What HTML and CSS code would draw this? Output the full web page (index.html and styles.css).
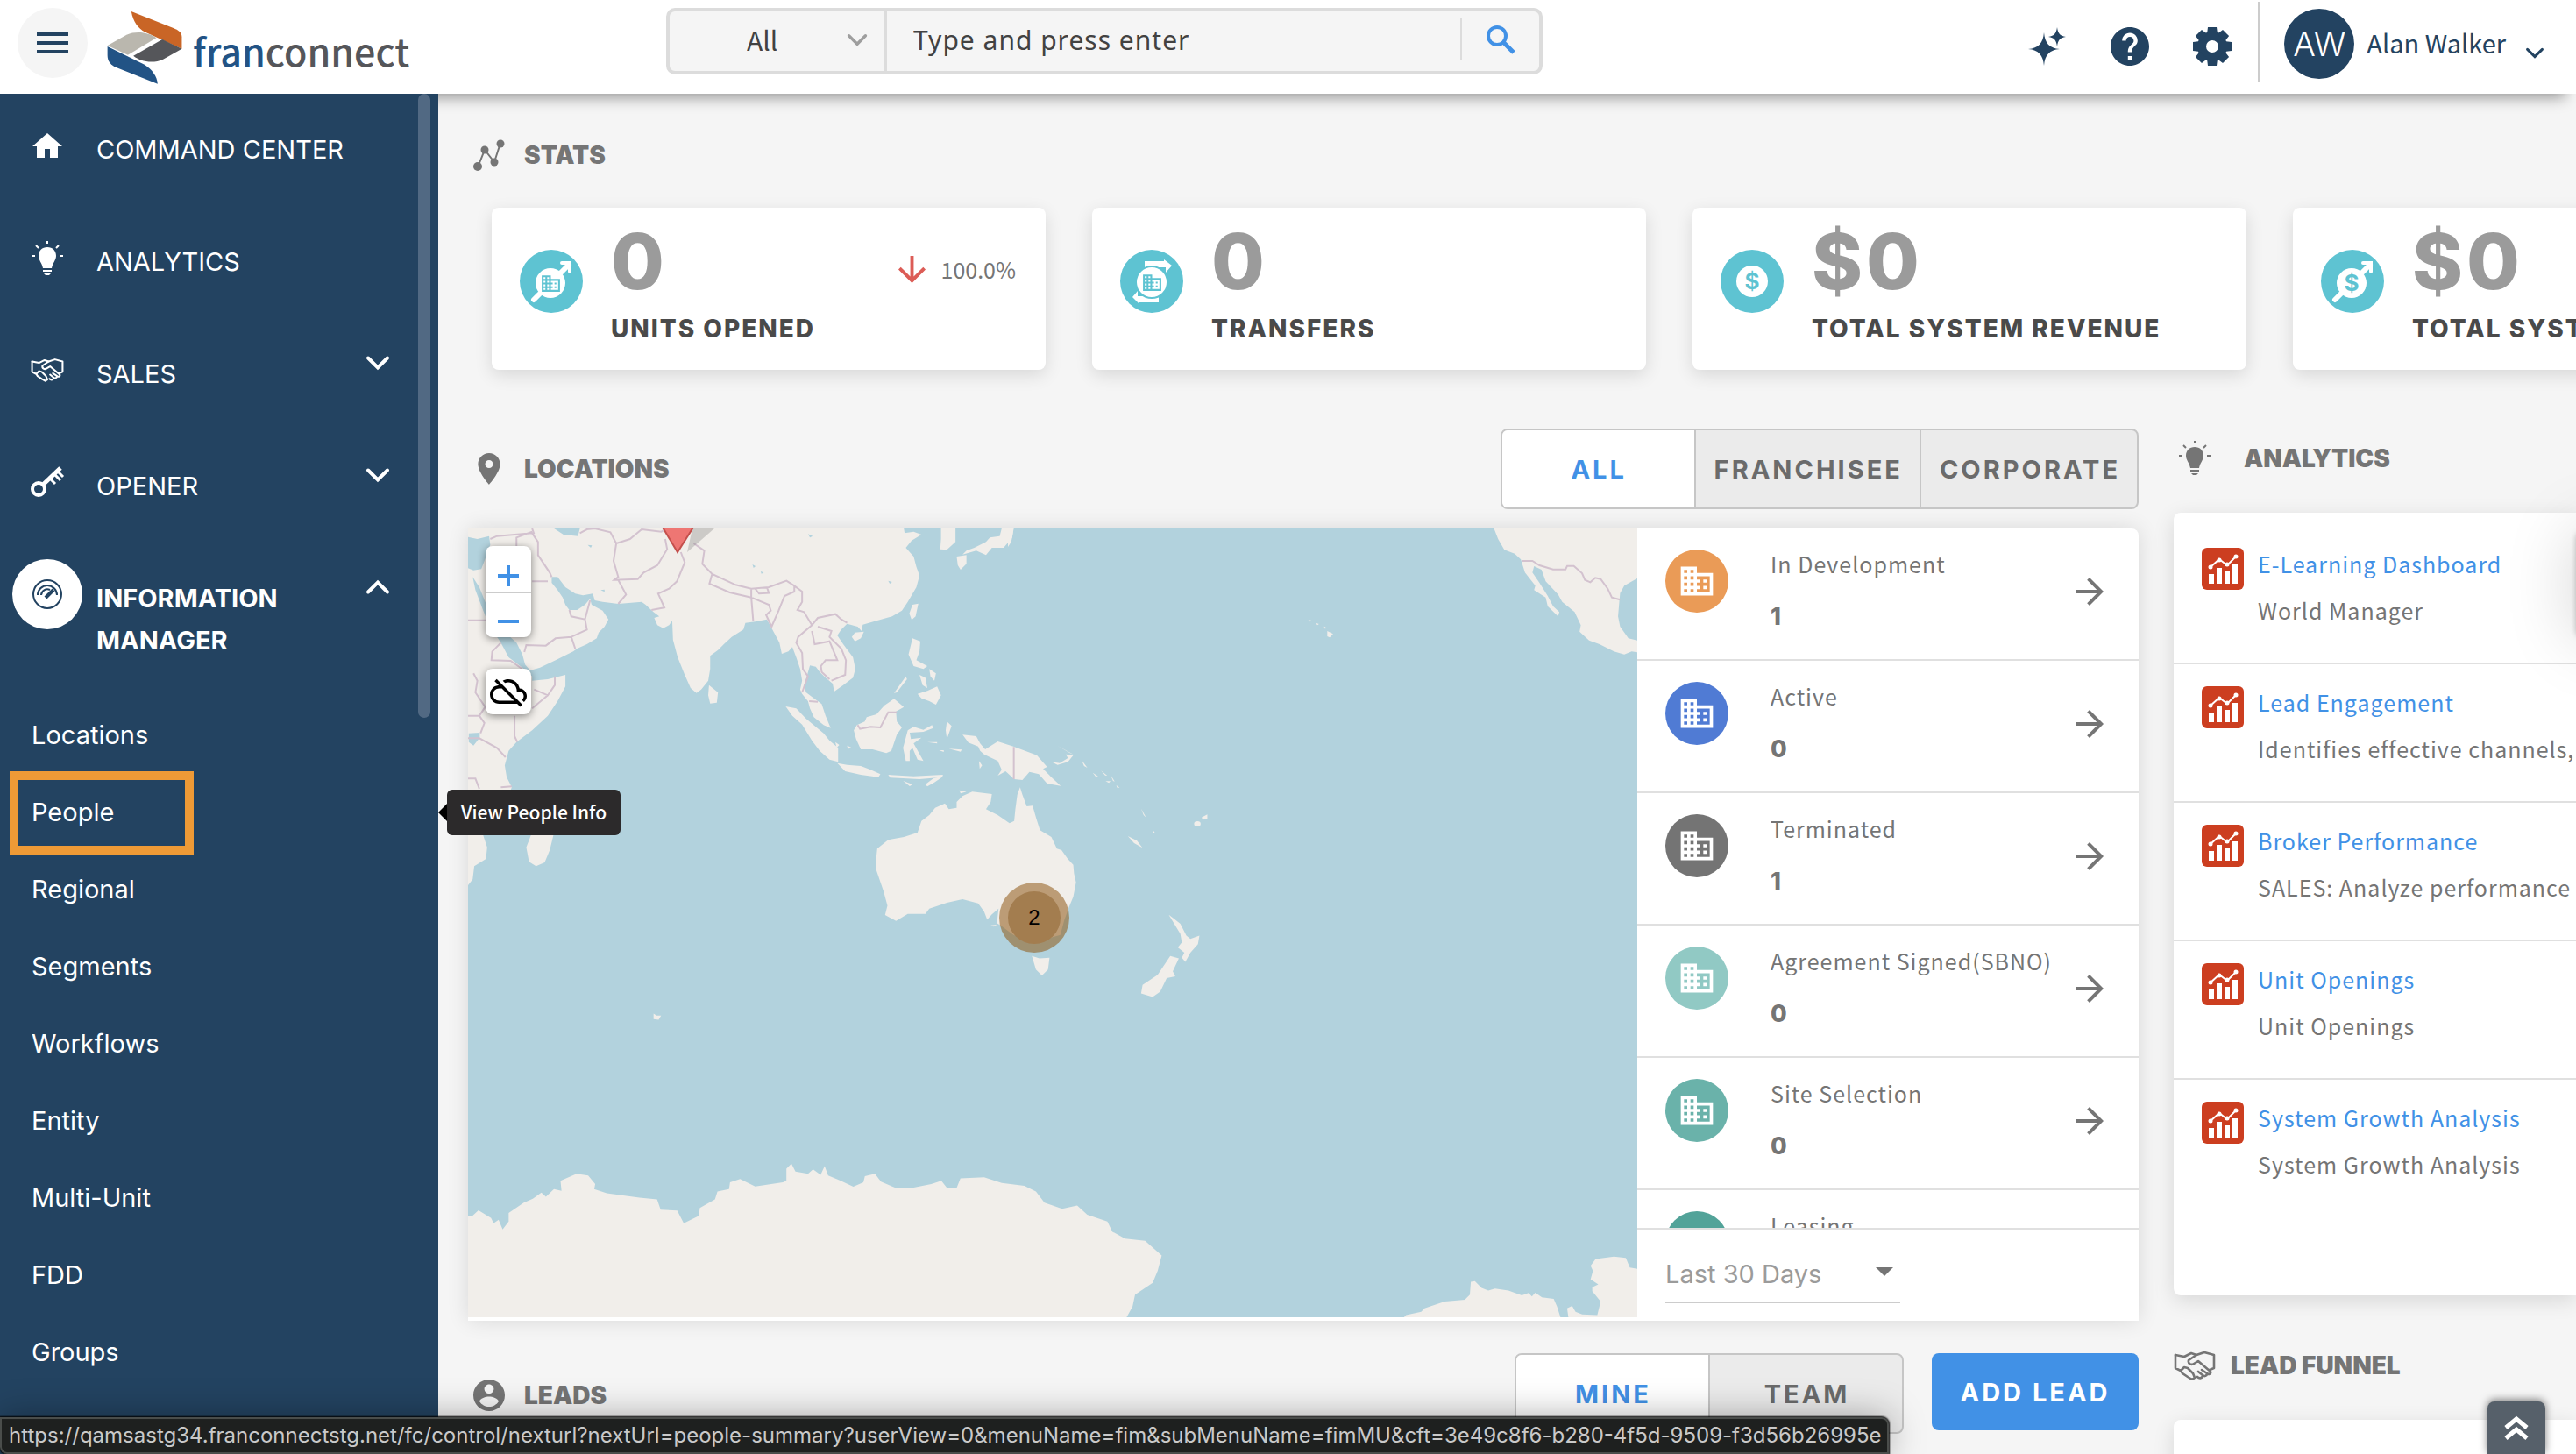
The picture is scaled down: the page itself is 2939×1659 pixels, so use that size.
FILE: index.html
```html
<!DOCTYPE html>
<html lang="en">
<head>
<meta charset="utf-8">
<title>FranConnect - Command Center</title>
<link rel="stylesheet" href="styles.css">
</head>
<body>
<svg class="sprite" aria-hidden="true">
  <symbol id="building" viewBox="0 0 24 24"><path d="M12 7V3H2v18h20V7H12zM6 19H4v-2h2v2zm0-4H4v-2h2v2zm0-4H4V9h2v2zm0-4H4V5h2v2zm4 12H8v-2h2v2zm0-4H8v-2h2v2zm0-4H8V9h2v2zm0-4H8V5h2v2zm10 12h-8v-2h2v-2h-2v-2h2v-2h-2V9h8v10zm-2-8h-2v2h2v-2zm0 4h-2v2h2v-2z"/></symbol>
  <symbol id="arrow" viewBox="4 4 16 16"><path d="M12 4l-1.41 1.41L16.17 11H4v2h12.17l-5.58 5.59L12 20l8-8z"/></symbol>
  <symbol id="chevron" viewBox="0 0 28 17"><path d="M3 3l11 11L25 3" fill="none" stroke="currentColor" stroke-width="4" stroke-linecap="round"/></symbol>
  <symbol id="bulb" viewBox="0 0 36 40"><path d="M18 7c6 0 10 4 10 10 0 5-4 8-5 14H13c-1-6-5-9-5-14C8 11 12 7 18 7zM13 33h10v2H13zM14 37h8l-2 2h-4z"/><path d="M18 0v3M5 5l3 3M31 5l-3 3M0 17h4M32 17h4" stroke="currentColor" stroke-width="2"/></symbol>
  <symbol id="handshake" viewBox="0 0 48 34"><g fill="none" stroke="currentColor" stroke-width="2.6" stroke-linejoin="round" stroke-linecap="round"><path d="M2 5l10 2 8-4 6 2 9-3 11 3v15l-5 2"/><path d="M2 5v15l6 3M26 5l-9 6c-1 4 3 6 6 4l5-3 14 12c1 2-2 4-4 2l-6-4M38 26c0 3-3 4-5 2l-5-4M33 29c-1 3-4 3-6 1M8 23l4-4 4 1 3 3 3 3 2 5-3 2-5-3-6-4z"/></g></symbol>
  <symbol id="chart" viewBox="0 0 48 48"><rect width="48" height="48" rx="6" fill="#cc3e20"/><path fill="#fff" d="M8 30h6v11H8zM17 23h6v18h-6zM26 27h6v14h-6zM35 19h6v22h-6z"/><path d="M10 22l10-9 9 7 10-10" fill="none" stroke="#fff" stroke-width="2"/><g fill="#fff"><circle cx="10" cy="22" r="2.5"/><circle cx="20" cy="14" r="2.5"/><circle cx="29" cy="19" r="2.5"/><circle cx="39" cy="10" r="2.5"/></g></symbol>
</svg>
<div class="app">
  <header class="topbar">
    <div class="brand">
      <button class="burger" aria-label="Menu"><span></span><span></span><span></span></button>
      <a class="logo" href="#">
        <svg width="88" height="84" viewBox="121 14 88 84"><g transform="scale(.4847 .3333)"><path fill="#c96526" d="M309 42C314 80 326 100 340 112L428 170V130C428 114 420 106 408 99Z"/><path fill="#bab7ae" d="M253 159L298 122C322 108 350 114 368 133L301 191Z"/><path fill="#55565a" d="M382 138L428 170L384 206C360 222 330 214 314 194Z"/><path fill="#225385" d="M253 162L340 224C358 240 370 265 371 290L275 235C260 226 253 212 253 192Z"/></g></svg>
        <span class="wordmark"><b>fran</b>connect</span>
      </a>
    </div>
    <form class="search">
      <div class="scope"><select aria-label="Search scope"><option>All</option></select><svg width="24" height="15"><use href="#chevron"/></svg></div>
      <input type="text" aria-label="Search" placeholder="Type and press enter">
      <button type="button" aria-label="Search"><svg width="34" height="34" viewBox="0 0 34 34" fill="none" stroke="currentColor"><circle cx="13" cy="13" r="10" stroke-width="4"/><path d="M20 20l12 12" stroke-width="5"/></svg></button>
    </form>
    <div class="tools">
      <button aria-label="Assistant"><svg width="44" height="44" viewBox="0 0 44 44"><path d="M18 6c1 12 6 18 18 19-12 1-17 7-18 19-1-12-6-18-18-19 12-1 17-7 18-19zM33 0c1 7 3 10 10 11-7 1-9 4-10 11-1-7-3-10-10-11 7-1 9-4 10-11z"/></svg></button>
      <button aria-label="Help"><svg width="44" height="44" viewBox="2 2 20 20"><path d="M12 2C6.48 2 2 6.48 2 12s4.48 10 10 10 10-4.48 10-10S17.52 2 12 2zm1 17h-2v-2h2v2zm2.07-7.75l-.9.92C13.45 12.9 13 13.5 13 15h-2v-.5c0-1.1.45-2.1 1.17-2.83l1.24-1.26c.37-.36.59-.86.59-1.41 0-1.1-.9-2-2-2s-2 .9-2 2H8c0-2.21 1.79-4 4-4s4 1.79 4 4c0 .88-.36 1.68-.93 2.25z"/></svg></button>
      <button aria-label="Settings"><svg width="44" height="44" viewBox="-22 -22 44 44"><circle r="12" fill="none" stroke="currentColor" stroke-width="10"/><g id="teeth"><path d="M-5 -22H5L6 -14H-6ZM-5 22H5L6 14H-6ZM-22 -5V5L-14 6V-6ZM22 -5V5L14 6V-6Z"/></g><use href="#teeth" transform="rotate(45)"/></svg></button>
    </div>
    <button class="user"><span class="avatar">AW</span><span class="name">Alan Walker</span><svg width="22" height="13"><use href="#chevron"/></svg></button>
  </header>
  <div class="body">
    <nav class="sidebar">
      <a class="item" href="#"><span class="ico"><svg width="34" height="28" viewBox="0 0 34 28"><path d="M17 0L34 15H29V28H20V18H14V28H5V15H0Z"/></svg></span><span class="label">COMMAND CENTER</span></a>
      <a class="item" href="#"><span class="ico"><svg width="36" height="40"><use href="#bulb"/></svg></span><span class="label">ANALYTICS</span></a>
      <a class="item" href="#"><span class="ico"><svg width="38" height="28"><use href="#handshake"/></svg></span><span class="label">SALES</span><svg class="chev" width="28" height="22"><use href="#chevron"/></svg></a>
      <a class="item" href="#"><span class="ico"><svg width="38" height="36" viewBox="0 0 38 36" fill="none" stroke="currentColor"><circle cx="9" cy="26" r="7" stroke-width="4"/><path d="M14 21L34 2" stroke-width="5"/><path d="M27 9l7 7M22 14l6 6M31 6l6 6" stroke-width="3"/></svg></span><span class="label">OPENER</span><svg class="chev" width="28" height="22"><use href="#chevron"/></svg></a>
      <a class="item current" href="#"><span class="ico"><svg width="36" height="36" viewBox="0 0 36 36" fill="none" stroke="currentColor" stroke-width="2"><circle cx="18" cy="18" r="16"/><path d="M7 19a11 11 0 0 1 22 0M11 19a7 7 0 0 1 10-6"/><path d="M16 22l9-9" stroke-width="4"/></svg></span><span class="label">INFORMATION MANAGER</span><svg class="chev up" width="28" height="22"><use href="#chevron"/></svg></a>
      <ul class="submenu">
        <li><a href="#">Locations</a></li>
        <li class="picked"><a href="#">People</a><span class="tooltip" role="tooltip">View People Info</span></li>
        <li><a href="#">Regional</a></li>
        <li><a href="#">Segments</a></li>
        <li><a href="#">Workflows</a></li>
        <li><a href="#">Entity</a></li>
        <li><a href="#">Multi-Unit</a></li>
        <li><a href="#">FDD</a></li>
        <li><a href="#">Groups</a></li>
      </ul>
      <span class="scrollbar"></span>
    </nav>
    <main class="main">
      <section class="stats">
        <h2 class="heading"><svg width="36" height="40" viewBox="0 0 36 40"><path d="M5 34L13 14L24 28L31 6" fill="none" stroke="currentColor" stroke-width="2"/><circle cx="5" cy="33" r="5"/><circle cx="13" cy="14" r="4.500"/><circle cx="24" cy="28" r="4.500"/><circle cx="31" cy="7" r="4.500"/></svg>STATS</h2>
        <div class="cards">
          <article class="card">
            <svg class="badge" viewBox="0 0 72 72"><g stroke="#fff" stroke-linecap="round" fill="none"><path d="M16 57l10-10M45 28l11-11" stroke-width="6"/><path d="M48 15h9v10" stroke-width="4"/></g><circle cx="35" cy="38" r="17" fill="#fff"/><use href="#building" x="23" y="26" width="25" height="25" fill="#5ec3d2"/></svg>
            <div class="figure"><strong>0</strong><span>UNITS OPENED</span></div>
            <div class="trend"><svg width="31" height="31"><use href="#arrow"/></svg>100.0%</div>
          </article>
          <article class="card">
            <svg class="badge" viewBox="0 0 72 72"><path fill="#fff" d="M28 13H50V11L59 18L52 26V20H28ZM44 60H22V62L14 54L20 47V53H44Z"/><circle cx="36" cy="37" r="18" fill="#fff" stroke="#5ec3d2" stroke-width="2"/><use href="#building" x="24" y="25" width="25" height="25" fill="#5ec3d2"/></svg>
            <div class="figure"><strong>0</strong><span>TRANSFERS</span></div>
          </article>
          <article class="card">
            <svg class="badge" viewBox="0 0 72 72"><circle cx="36" cy="36" r="18" fill="#fff"/><text x="36" y="45" class="dollar">$</text></svg>
            <div class="figure"><strong>$0</strong><span>TOTAL SYSTEM REVENUE</span></div>
          </article>
          <article class="card">
            <svg class="badge" viewBox="0 0 72 72"><g stroke="#fff" stroke-linecap="round" fill="none"><path d="M16 57l10-10M45 28l11-11" stroke-width="6"/><path d="M48 15h9v10" stroke-width="4"/></g><circle cx="35" cy="38" r="17" fill="#fff"/><text x="35" y="47" class="dollar">$</text></svg>
            <div class="figure"><strong>$0</strong><span>TOTAL SYSTEM REVENUE</span></div>
          </article>
        </div>
      </section>
      <div class="columns">
        <div class="left">
          <div class="bar">
            <h2 class="heading"><svg width="36" height="36" viewBox="2 2 20 20"><path d="M12 2C8.130 2 5 5.130 5 9c0 5.250 7 13 7 13s7-7.750 7-13c0-3.870-3.130-7-7-7zm0 9.500c-1.380 0-2.500-1.120-2.500-2.500s1.120-2.500 2.500-2.500 2.500 1.120 2.500 2.500-1.120 2.500-2.500 2.500z"/></svg>LOCATIONS</h2>
            <div class="toggle"><button class="on">ALL</button><button>FRANCHISEE</button><button>CORPORATE</button></div>
          </div>
          <section class="panel">
            <div class="map">
              <svg class="world" viewBox="534 603 1334 900" preserveAspectRatio="xMinYMin slice">
                <g class="land" transform="translate(500 590) scale(.4464 .33333)">
                  <path d="M76 39H1190L1192 55 1215 50 1235 60 1210 80 1195 105 1215 135 1222 170 1230 200 1222 240 1200 290 1185 320 1160 340 1120 355 1085 368 1082 390 1072 375 1045 365 1030 385 1020 405 1035 435 1060 480 1066 520 1060 550 1035 575 1012 597 1008 570 990 550 975 530 965 512 950 508 942 545 935 575 940 600 960 620 980 640 990 680 1003 722 985 712 960 685 950 655 945 630 930 605 925 590 930 560 925 520 915 480 905 445 895 460 878 468 872 430 860 400 850 375 840 350 810 358 785 362 780 385 750 410 730 435 715 455 695 475 695 520 690 560 672 590 660 602 645 585 630 540 612 480 600 420 598 355 590 370 575 380 560 370 552 345 565 340 550 325 530 300 520 290 460 297 420 290 400 285 395 262 370 268 350 262 325 240 305 205 290 205 290 225 305 250 318 275 325 300 335 318 355 318 375 300 388 280 392 300 420 320 435 350 425 375 410 395 405 415 380 435 355 450 345 460 300 490 260 515 235 525 222 505 215 470 200 430 175 400 150 360 120 290 105 240 88 205 95 250 115 320 130 370 160 430 180 480 215 515 240 545 240 560 280 555 325 540 325 580 305 630 280 680 240 730 200 770 180 800 170 850 175 890 188 925 170 980 130 1040 115 1090 125 1130 122 1170 92 1195 88 1240 76 1260Z"/>
                  <path d="M225 1130L238 1085H295L285 1140 272 1182 250 1195 232 1180ZM692 575L715 600 712 635 695 638 690 610ZM1065 395L1088 392 1080 415 1065 425 1057 410ZM1212 300L1227 296 1220 340 1210 352 1204 330ZM1285 39H1322V85L1300 112 1283 110 1285 75ZM1325 135L1350 130V160L1335 180 1328 165ZM1350 115L1370 105 1400 85 1410 70 1435 65 1440 39H1470L1467 70 1445 105 1415 105 1400 130 1375 115 1340 128Z"/>
                  <path d="M888 648L915 655 940 690 985 740 1000 765 1022 790 1022 838 1000 830 975 800 955 765 930 710 905 680ZM1020 842L1045 848 1080 852 1105 865 1130 880 1125 890 1080 882 1040 870ZM1150 882L1215 887 1290 882 1288 890 1230 897 1155 892ZM1245 915L1265 895 1290 888 1268 908 1250 922ZM1188 903L1212 915 1205 921ZM1070 712L1090 700 1095 685 1120 675 1140 645 1165 622 1190 650 1170 665 1172 700 1185 720 1172 745 1158 800 1145 808 1110 795 1080 795 1068 760 1062 730ZM1200 730L1215 718 1240 728 1262 712 1265 722 1240 735 1205 738 1208 760 1235 755 1215 775 1240 835 1225 830 1212 790 1205 800 1205 835 1195 835 1188 790Z"/>
                  <path d="M1212 415L1232 425 1230 460 1222 490 1250 510 1240 520 1215 510 1202 470ZM1225 605L1250 595 1275 580 1285 610 1272 642 1255 630 1235 620ZM1255 520L1272 535 1268 560 1258 545ZM1230 540L1245 550 1250 585 1238 575ZM1165 602L1195 545 1198 555 1172 600ZM1300 700L1312 715 1300 760 1297 730ZM1305 793L1338 796 1335 803ZM1250 770H1275V775ZM1280 798H1292V804ZM1382 835L1390 850 1384 862ZM1015 770L1025 780 1018 790ZM1045 782L1055 788 1047 794Z"/>
                  <path d="M1340 745L1375 750 1385 775 1398 795 1430 768 1470 785 1530 815 1556 855 1546 862 1567 890 1591 920 1556 912 1535 880 1511 872 1493 900 1472 897 1450 870 1430 885 1440 865 1430 835 1395 812 1385 800 1380 785 1355 772Z"/>
                  <path d="M1122 1135L1150 1105 1190 1095 1225 1080 1235 1040 1255 1020 1270 995 1295 980 1305 1000 1325 995V975L1340 955 1365 940 1415 948 1412 975 1400 1000 1430 1020 1460 1048 1472 1040 1475 1000 1480 950 1487 925 1493 950 1504 990 1519 988 1528 1030 1538 1072 1567 1095 1581 1135 1593 1140 1609 1170 1623 1190 1625 1220 1630 1250 1623 1300 1612 1335 1600 1380 1590 1430 1550 1445 1500 1445 1470 1430 1440 1400 1428 1390 1432 1340 1415 1360 1403 1378 1395 1350 1380 1322 1340 1308 1300 1320 1255 1340 1245 1358 1200 1358 1170 1382 1142 1362 1148 1330 1138 1280 1120 1210V1160ZM1332 935L1350 940 1335 946ZM1412 1397L1428 1395 1420 1402Z"/>
                </g>
                <g class="water" transform="translate(500 590) scale(.4464 .33333)">
                  <path d="M76 68L100 75 130 65 133 95 118 150 110 178 90 182 76 175ZM296 39H362L357 65 320 60ZM78 740L106 738V755L90 782 78 770ZM415 250L425 248 425 256ZM382 95L393 97 390 105ZM945 58L957 65 950 70ZM803 162L811 168 806 174ZM824 186L832 190 826 194ZM1150 218L1160 222 1154 228Z"/>
                </g>
                <g class="border" transform="translate(500 590) scale(.4464 .33333)">
                  <path d="M133 75L150 65 240 55 255 85 255 130 285 190 290 205M240 39L245 58M200 100V70L240 50M240 220H280M362 55L380 42 400 39 440 52 455 90 490 75 520 42 570 50 585 39M455 90L448 150 460 205 450 215 510 212 525 190 560 165 585 110 580 75M460 215L480 265 460 297M620 120L630 155 610 220 590 245 562 262 578 310 545 318M653 90L680 115 675 160 700 195 760 232 800 245 845 240 890 218 910 235 930 255V290L918 318 935 325 955 370 920 410 915 430 930 465 932 520 945 545 930 600M700 195L693 228 745 258 800 275 845 300 850 320 838 335 852 375 870 320 885 270 910 255V235M800 245V275L805 355M810 245L820 262 845 260 840 240M955 370L970 345 1015 332 1030 350 1045 362M970 375L1005 390 1000 410 1030 450 1042 490 1040 540 1005 560M955 390L962 435 1000 425 1020 490H990L978 510 980 530 1000 555M948 630L970 632M1072 712L1078 725 1105 718 1130 720 1150 668 1172 668M1471 787V897M335 318L340 340 375 350 388 285M375 350L380 385 340 410 350 450M340 410L300 415 275 440 225 438 220 462M76 353H122M160 430L138 460 136 490 185 492 215 520M90 535L100 560 95 600 120 650 105 680H76M298 545V575L280 610 245 590M280 610L240 655M195 680V750L202 770M76 757H105L150 790 172 822M76 895H95L105 930M160 925L188 922M105 680L118 705 108 740"/>
                </g>
                <g class="land" transform="translate(1150 590) scale(.4719 .33333)">
                  <path d="M0 39H14L8 85 0 102ZM1175 39L1185 75 1200 112 1225 125 1240 145 1250 190 1275 235 1272 250 1300 275 1305 305 1330 340 1333 325 1318 305 1305 270 1285 225 1268 190 1272 168 1290 180 1300 220 1330 265 1340 290 1370 325 1385 370 1382 392 1405 422 1430 435 1465 460 1490 470 1508 460 1530 465V425L1500 415 1480 375 1475 340 1478 290 1480 260 1490 235 1521 210H1530V39Z"/>
                  <path d="M105 838L125 842 145 825 140 812 158 815 145 838 120 848ZM178 832L192 858 184 852ZM205 875L218 887 212 888ZM225 868L240 885 235 884ZM236 904L248 904 244 910ZM248 882L258 905 254 903ZM262 918L270 926 264 926ZM322 998L334 1028 328 1020ZM290 1092L312 1108 325 1132 305 1116ZM468 1028L482 1018V1032L472 1036ZM726 352L733 353 730 358ZM744 362L752 366 748 370ZM764 374L772 380 766 382ZM772 390L786 400 778 412 772 408ZM350 1070L355 1080 351 1084ZM120 783L158 812 150 808Z"/>
                  <ellipse cx="458" cy="1050" rx="8" ry="9"/>
                </g>
                <g class="border" transform="translate(1150 590) scale(.4719 .33333)">
                  <path d="M1243 150H1268L1285 165 1318 179H1348L1352 167H1368L1388 192 1395 215 1408 223 1420 208 1433 212 1450 245 1460 275 1480 283"/>
                </g>
                <g class="land" transform="translate(500 1050) scale(.574 .3884)">
                  <path d="M1180 105L1195 112 1215 110 1212 145 1200 162 1188 145ZM1452 -16L1463 -4 1475 10 1487 45 1495 55 1513 45 1510 70 1495 95 1485 122 1478 110 1483 95 1470 80 1478 65 1475 40ZM1455 105L1472 112 1460 150 1465 165 1448 170 1435 210 1420 225 1397 215 1400 190 1430 160ZM428 274L434 280 443 280 438 292 428 290Z"/>
                  <path d="M50 872L68 868 80 852 105 875 110 890 120 880 128 908 140 885V860L170 830 188 818 205 800 214 812 230 790 245 795 243 765 275 745 298 750 312 775 310 790 335 802 400 815 435 820 442 850 475 853 488 890 518 868 520 845 550 820 555 797 578 790 580 770 600 760 630 782 685 770 692 765V730L702 715 710 738 735 745 745 732 760 748 768 722 775 750 800 765 825 783 845 770 848 752 868 745 880 768 912 788 945 785 980 775 1000 765 1012 788H1030L1038 758 1085 755 1120 772 1165 780 1188 797 1205 830 1240 848 1270 838 1290 865 1330 885 1340 915 1365 935 1405 942 1438 985 1430 1030 1420 1065 1385 1100 1380 1135 1365 1175H50Z"/>
                </g>
                <g class="land" transform="translate(1300 1050) scale(.3827 .3884)">
                  <path d="M780 1175L795 1160 840 1150 850 1140 910 1120 970 1115 985 1100 988 1062 1000 1060 1020 1080 1040 1088 1060 1082 1100 1088 1140 1102 1160 1095 1170 1105 1180 1094 1200 1108 1235 1112 1245 1135 1258 1175ZM1280 1175L1275 1140 1290 1133 1300 1150 1320 1158 1365 1160 1375 1120 1350 1090V1078L1368 1070 1345 1055 1352 1030 1345 1015 1360 995 1415 988 1450 992 1462 1020 1484 1024H1500V1175Z"/>
                </g>
                <path d="M790 603H815L784 630Z" fill="#777" opacity=".3"/>
                <path d="M755 600H792L773 630Z" fill="#ee7673" stroke="#c4504d" stroke-width="2"/>
              </svg>
              <div class="zoom"><button aria-label="Zoom in"><svg width="26" height="26" viewBox="0 0 26 26"><path d="M11 1h4v10h10v4H15v10h-4V15H1v-4h10z"/></svg></button><button aria-label="Zoom out"><svg width="26" height="26" viewBox="0 0 26 26"><path d="M1 11h24v4H1z"/></svg></button></div>
              <button class="weather" aria-label="Clouds off"><svg width="42" height="42" viewBox="0 0 24 24"><path d="M24 15c0-2.640-2.050-4.780-4.650-4.960C18.670 6.590 15.640 4 12 4c-1.330 0-2.570.36-3.650.97l1.490 1.490C10.510 6.170 11.230 6 12 6c3.040 0 5.500 2.460 5.500 5.500v.5H19c1.660 0 3 1.340 3 3 0 .99-.48 1.850-1.210 2.400l1.410 1.410c1.090-.92 1.800-2.270 1.800-3.810zM4.410 3.860L3 5.270l2.770 2.770h-.42C2.340 8.360 0 10.910 0 14c0 3.310 2.690 6 6 6h11.730l2 2 1.410-1.410L4.410 3.860zM6 18c-2.210 0-4-1.790-4-4s1.790-4 4-4h1.730l8 8H6z"/></svg></button>
              <button class="cluster"><span>2</span></button>
            </div>
            <div class="status">
              <ul class="statuses">
                <li><i class="dot orange"><svg width="44" height="44"><use href="#building"/></svg></i><div><span>In Development</span><b>1</b></div><a href="#" aria-label="Open In Development"><svg width="32" height="32"><use href="#arrow"/></svg></a></li>
                <li><i class="dot blue"><svg width="44" height="44"><use href="#building"/></svg></i><div><span>Active</span><b>0</b></div><a href="#" aria-label="Open Active"><svg width="32" height="32"><use href="#arrow"/></svg></a></li>
                <li><i class="dot gray"><svg width="44" height="44"><use href="#building"/></svg></i><div><span>Terminated</span><b>1</b></div><a href="#" aria-label="Open Terminated"><svg width="32" height="32"><use href="#arrow"/></svg></a></li>
                <li><i class="dot mint"><svg width="44" height="44"><use href="#building"/></svg></i><div><span>Agreement Signed(SBNO)</span><b>0</b></div><a href="#" aria-label="Open Agreement Signed"><svg width="32" height="32"><use href="#arrow"/></svg></a></li>
                <li><i class="dot teal"><svg width="44" height="44"><use href="#building"/></svg></i><div><span>Site Selection</span><b>0</b></div><a href="#" aria-label="Open Site Selection"><svg width="32" height="32"><use href="#arrow"/></svg></a></li>
                <li><i class="dot green"><svg width="44" height="44"><use href="#building"/></svg></i><div><span>Leasing</span></div></li>
              </ul>
              <div class="period"><div class="picker"><select aria-label="Period"><option>Last 30 Days</option></select><svg width="20" height="10" viewBox="0 0 20 10"><path d="M0 0H20L10 10Z"/></svg></div></div>
            </div>
          </section>
          <div class="bar leads">
            <h2 class="heading"><svg width="36" height="36" viewBox="2 2 20 20"><path d="M12 2C6.480 2 2 6.480 2 12s4.480 10 10 10 10-4.480 10-10S17.520 2 12 2zm0 3c1.660 0 3 1.340 3 3s-1.340 3-3 3-3-1.340-3-3 1.340-3 3-3zm0 14.200c-2.500 0-4.710-1.280-6-3.220.03-1.990 4-3.080 6-3.080 1.990 0 5.970 1.090 6 3.080-1.290 1.940-3.500 3.220-6 3.220z"/></svg>LEADS</h2>
            <div class="toggle"><button class="on">MINE</button><button class="even">TEAM</button></div>
            <button class="primary">ADD LEAD</button>
          </div>
        </div>
        <aside class="right">
          <h2 class="heading analytics"><svg width="36" height="40"><use href="#bulb"/></svg>ANALYTICS</h2>
          <ul class="reports">
            <li><svg width="48" height="48"><use href="#chart"/></svg><div><a href="#">E-Learning Dashboard</a><p>World Manager</p></div></li>
            <li><svg width="48" height="48"><use href="#chart"/></svg><div><a href="#">Lead Engagement</a><p>Identifies effective channels,</p></div></li>
            <li><svg width="48" height="48"><use href="#chart"/></svg><div><a href="#">Broker Performance</a><p>SALES: Analyze performance</p></div></li>
            <li><svg width="48" height="48"><use href="#chart"/></svg><div><a href="#">Unit Openings</a><p>Unit Openings</p></div></li>
            <li><svg width="48" height="48"><use href="#chart"/></svg><div><a href="#">System Growth Analysis</a><p>System Growth Analysis</p></div></li>
          </ul>
          <h2 class="heading funnel"><svg width="48" height="34"><use href="#handshake"/></svg>LEAD FUNNEL</h2>
          <div class="funnel-card"></div>
        </aside>
      </div>
      <span class="drawer"></span>
    </main>
  </div>
  <button class="to-top" aria-label="Back to top"><svg width="28" height="28" viewBox="0 0 28 28" fill="none" stroke="#fff" stroke-width="5"><path d="M2 14L14 4L26 14M2 26L14 16L26 26"/></svg></button>
  <div class="link-preview">https://qamsastg34.franconnectstg.net/fc/control/nexturl?nextUrl=people-summary?userView=0&amp;menuName=fim&amp;subMenuName=fimMU&amp;cft=3e49c8f6-b280-4f5d-9509-f3d56b26995e</div>
</div>
</body>
</html>
```
FILE: styles.css
```css
:root {
  --navy: #234361;
  --blue: #4191e6;
  --gray: #757575;
  --line: #e0e0e0;
  --display: Inter, "Open Sans", sans-serif;
  --text: "Noto Sans CJK SC", "Noto Sans", sans-serif;
}

* { box-sizing: border-box; }
body { margin: 0; font-family: var(--display); font-size: 28px; color: var(--gray); background: #f5f5f5; }
button, input, select { margin: 0; padding: 0; border: 0; background: none; font: inherit; color: inherit; }
select { appearance: none; }
a { color: inherit; text-decoration: none; }
ul { list-style: none; margin: 0; padding: 0; }
h2, p { margin: 0; }
svg { display: block; flex: none; overflow: visible; }
svg:not([fill]) { fill: currentColor; }
.sprite { position: absolute; width: 0; height: 0; }

.app { position: relative; display: flex; flex-direction: column; height: 100vh; overflow: hidden; }

/* Top bar */
.topbar { position: relative; z-index: 2; flex: none; display: grid; grid-template-columns: 760px minmax(0, 1000px) 1fr auto; height: 107px; background: #fff; color: var(--navy); box-shadow: -12px 4px 16px rgba(0, 0, 0, .4); }
.brand { display: flex; padding: 9px 20px; gap: 21px; }
.burger { display: flex; flex-direction: column; justify-content: center; gap: 6px; width: 80px; height: 80px; padding: 0 22px; border-radius: 50%; background: #f5f5f5; }
.burger span { height: 4px; background: var(--navy); }
.logo { display: flex; gap: 11px; height: 90px; padding-top: 4px; }
.wordmark { padding-top: 12px; font: 500 43px/64px var(--text); color: #55565a; }
.wordmark b { font-weight: 500; color: #225385; }
.search { display: flex; height: 76px; margin-top: 9px; border: 4px solid #dcdcdc; border-radius: 10px; background: #f5f5f5; color: #424242; }
.scope { display: flex; align-items: center; width: 248px; padding-right: 18px; border-right: 4px solid #dcdcdc; color: #9e9e9e; }
.scope select { flex: 1; height: 60px; padding: 0 0 4px 88px; font: 30px/56px var(--text); color: #424242; }
.scope svg { margin-bottom: 4px; }
.search input { flex: 1; padding: 0 0 2px 30px; font: 30px/60px "Noto Sans", sans-serif; letter-spacing: 1px; }
.search input::placeholder { color: #424242; opacity: 1; }
.search > button { display: grid; place-items: center; width: 90px; height: 48px; margin-top: 8px; border-left: 2px solid #dcdcdc; color: var(--blue); }
.tools { display: flex; justify-content: flex-end; align-items: center; gap: 50px; padding: 0 30px 2px 0; }
.user { display: flex; align-items: center; gap: 14px; height: 92px; margin: 2px 36px 0 0; padding: 4px 0 0 28px; border-left: 2px solid #ccc; font: 29px/40px var(--text); }
.name { padding-bottom: 4px; }
.user svg { margin: 20px 0 0 8px; }
.avatar { display: grid; place-items: center; width: 80px; height: 80px; border-radius: 50%; background: var(--navy); color: #fff; font: 300 38px/80px var(--display); }

/* Sidebar */
.body { flex: 1; display: flex; min-height: 0; }
.sidebar { position: relative; z-index: 3; flex: none; width: 500px; background: var(--navy); color: #fff; font-weight: 400; font-size: 29px; line-height: 48px; }
.item { display: flex; align-items: flex-start; gap: 16px; padding: 40px 55px 40px 14px; }
.ico { display: grid; place-items: center; flex: none; width: 80px; height: 38px; }
.label { flex: 1; max-width: 240px; white-space: nowrap; }
.chev { margin-left: auto; }
.up { transform: scaleY(-1); }
.current { font-weight: 700; }
.current .label { white-space: normal; }
.current .ico { height: 80px; margin: -21px 0; border-radius: 50%; background: #fff; color: var(--navy); }
.submenu a { display: block; padding: 20px 36px; }
.picked { position: relative; }
.picked::after { content: ""; position: absolute; top: -3px; bottom: -4px; left: 11px; width: 190px; border: 10px solid #ee9a36; }
.tooltip { position: absolute; top: 18px; left: 510px; height: 52px; padding: 0 16px; border-radius: 6px; background: #2c2a2b; font: 500 21px/50px var(--text); white-space: nowrap; }
.tooltip::before { content: ""; position: absolute; top: 16px; right: 100%; border: 10px solid transparent; border-left: 0; border-right-color: #000; }
.scrollbar { position: absolute; top: 0; right: 9px; width: 14px; height: 712px; border-radius: 7px; background: #516983; }

/* Content */
.main { position: relative; flex: 1; min-width: 0; padding: 46px 0 0 34px; overflow: hidden; }
.heading { display: flex; align-items: center; gap: 22px; min-height: 48px; padding-left: 6px; font-size: 28px; font-weight: 900; line-height: 48px; }
.cards { display: flex; gap: 53px; padding: 36px 0 67px 27px; }
.card { display: flex; flex: none; width: 632px; height: 185px; padding: 0 34px 0 32px; border-radius: 8px; background: #fff; box-shadow: 0 6px 20px rgba(0, 0, 0, .12); }
.badge { width: 72px; height: 72px; margin-top: 48px; border-radius: 50%; background: #5ec3d2; }
.dollar { font: 700 26px var(--display); text-anchor: middle; fill: #5ec3d2; }
.figure { display: flex; flex-direction: column; flex: 1; padding: 16px 0 0 32px; white-space: nowrap; }
.figure strong { font-size: 88px; font-weight: 800; line-height: 90px; letter-spacing: 4px; color: #9b9b9b; }
.figure span { padding-top: 12px; font-size: 28px; font-weight: 800; line-height: 40px; letter-spacing: 2px; color: #4a4a4a; }
.trend { display: flex; align-items: center; gap: 18px; height: 40px; margin-top: 50px; font: 25px/40px var(--text); }
.trend svg { color: #dc5c56; transform: rotate(90deg); }

.columns { display: grid; grid-template-columns: minmax(0, 1fr) 459px; gap: 40px; }
.bar { display: flex; align-items: center; height: 92px; }
.bar .heading { flex: 1; }
.toggle { display: flex; height: 92px; border: 2px solid #c6c6c6; border-radius: 8px; background: #ebebeb; overflow: hidden; }
.toggle button { padding: 0 19px 0 21px; font-size: 29px; font-weight: 700; letter-spacing: 3px; color: #6b6b6b; }
.toggle button + button { border-left: 2px solid #c6c6c6; }
.toggle .on { width: 219px; background: #fff; color: var(--blue); }
.toggle .even { width: 221px; }

.panel { display: flex; margin-top: 22px; background: #fff; border-radius: 8px 8px 0 0; box-shadow: 0 0 24px rgba(0, 0, 0, .12); }
.map { position: relative; flex: 1; height: 900px; background: #b2d2dd; overflow: hidden; }
.world { width: 100%; height: 100%; overflow: hidden; }
.land { fill: #f1eeea; }
.water { fill: #b2d2dd; }
.border path { fill: none; stroke: #d3c2cf; stroke-width: 2; vector-effect: non-scaling-stroke; }
.zoom, .weather { position: absolute; left: 20px; width: 52px; border-radius: 8px; background: #fff; box-shadow: 0 2px 10px rgba(0, 0, 0, .45); }
.zoom { top: 20px; color: var(--blue); }
.zoom button { display: grid; place-items: end center; width: 52px; height: 52px; padding-bottom: 5px; }
.zoom button + button { border-top: 2px solid #ccc; }
.weather { top: 160px; display: grid; place-items: center; height: 52px; color: #000; }
.cluster { position: absolute; top: 404px; left: 606px; width: 80px; height: 80px; padding: 10px; border-radius: 50%; background: rgba(143, 90, 21, .55); font: 24px/60px "Liberation Sans", sans-serif; color: #000; }
.cluster span { display: block; border-radius: 50%; background: #a37d4f; }

.status { width: 572px; }
.statuses { height: 800px; overflow: hidden; border-bottom: 2px solid var(--line); }
.statuses li { display: flex; height: 151px; padding: 24px 40px 0 32px; border-bottom: 2px solid var(--line); }
.statuses div { flex: 1; padding-left: 48px; white-space: nowrap; }
.statuses span { display: block; font: 25px/32px var(--text); letter-spacing: 1px; }
.statuses b { display: block; padding-top: 25px; font-size: 27px; line-height: 40px; font-weight: 800; }
.statuses a { margin-top: 32px; }
.dot { display: grid; place-items: center; width: 72px; height: 72px; border-radius: 50%; color: #fff; }
.orange { background: #ea9b57; }
.blue { background: #507bd4; }
.gray { background: #747474; }
.mint { background: #91c9c4; }
.teal { background: #6ab2aa; }
.green { background: #52a399; }
.period { padding: 20px 32px; }
.picker { display: flex; align-items: center; width: 268px; height: 64px; padding-right: 8px; border-bottom: 2px solid #ccc; }
.picker select { flex: 1; color: #9b9b9b; font-size: 29px; line-height: 60px; }
.picker svg { margin-bottom: 6px; }
.leads { margin-top: 37px; }
.leads .heading { padding-top: 4px; }
.primary { align-self: flex-start; width: 236px; height: 88px; margin-left: 32px; border-radius: 8px; background: var(--blue); color: #fff; font-size: 29px; font-weight: 700; letter-spacing: 3px; }

.analytics { gap: 38px; height: 68px; margin-bottom: 28px; }
.reports { padding: 15px 0 88px; border-radius: 8px 0 0 8px; background: #fff; box-shadow: 0 6px 24px rgba(0, 0, 0, .12); }
.reports li { display: flex; gap: 16px; height: 158px; padding: 25px 0 0 32px; border-bottom: 2px solid var(--line); font: 25px/53px var(--text); letter-spacing: 1px; white-space: nowrap; }
.reports li:last-child { border: 0; }
.reports div { margin-top: -8px; }
.reports a { display: block; color: var(--blue); }
.funnel { gap: 17px; margin: 56px 0 38px; padding: 0; }
.funnel-card { height: 120px; border-radius: 8px 0 0 8px; background: #fff; box-shadow: 0 6px 24px rgba(0, 0, 0, .12); }
.drawer { position: absolute; top: 500px; left: 100%; width: 80px; height: 120px; border-radius: 8px; box-shadow: 0 0 80px rgba(0, 0, 0, .18), 0 0 6px rgba(0, 0, 0, .25); }

/* Overlays */
.to-top { position: absolute; z-index: 4; right: 35px; bottom: 0; width: 66px; height: 60px; padding: 0 19px; border-radius: 8px 8px 0 0; background: #56606a; box-shadow: 0 -2px 10px rgba(0, 0, 0, .5); }
.link-preview { position: absolute; z-index: 5; left: 0; bottom: 0; height: 42px; padding: 0 6px 0 8px; border: 2px solid #4a4d4b; border-radius: 0 8px 0 8px; background: #1e201f; box-shadow: 0 0 2px 1px #000, 0 0 40px rgba(0, 0, 0, .35); color: #c9c9c9; font-size: 24px; line-height: 38px; white-space: nowrap; }
```
